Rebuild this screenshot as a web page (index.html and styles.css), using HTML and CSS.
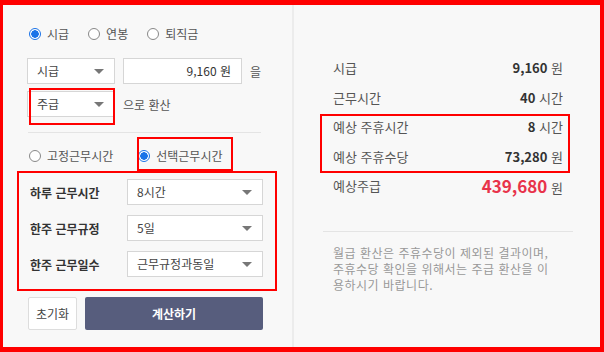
FILE: index.html
```html
<!DOCTYPE html>
<html lang="ko">
<head>
    <meta charset="UTF-8">
    <meta name="viewport" content="width=device-width, initial-scale=1.0">
    <title>주급 계산기</title>
    <link rel="stylesheet" href="styles.css">
</head>
<body>
    <div class="frame">
        <div class="calc">
            <section class="input-panel">
                <div class="radio-row">
                    <label class="radio on"><span class="dot"></span>시급</label>
                    <label class="radio"><span class="dot"></span>연봉</label>
                    <label class="radio"><span class="dot"></span>퇴직금</label>
                </div>
                <div class="row first">
                    <div class="select unit">시급<span class="caret"></span></div>
                    <div class="amount">9,160 원</div>
                    <span class="suffix">을</span>
                </div>
                <div class="row">
                    <div class="select unit">주급<span class="caret"></span></div>
                    <span class="suffix">으로 환산</span>
                </div>
                <div class="line"></div>
                <div class="radio-row">
                    <label class="radio wide"><span class="dot"></span>고정근무시간</label>
                    <label class="radio on"><span class="dot"></span>선택근무시간</label>
                </div>
                <div class="fields">
                    <div class="field">
                        <span class="label">하루 근무시간</span>
                        <div class="select long">8시간<span class="caret"></span></div>
                    </div>
                    <div class="field">
                        <span class="label">한주 근무규정</span>
                        <div class="select long">5일<span class="caret"></span></div>
                    </div>
                    <div class="field">
                        <span class="label">한주 근무일수</span>
                        <div class="select long">근무규정과동일<span class="caret"></span></div>
                    </div>
                </div>
                <div class="buttons">
                    <button class="btn-reset">초기화</button>
                    <button class="btn-calc">계산하기</button>
                </div>
            </section>
            <div class="divider"></div>
            <section class="result-panel">
                <div class="result">
                    <span>시급</span>
                    <span class="value"><b>9,160</b> 원</span>
                </div>
                <div class="result">
                    <span>근무시간</span>
                    <span class="value"><b>40</b> 시간</span>
                </div>
                <div class="result">
                    <span>예상 주휴시간</span>
                    <span class="value"><b>8</b> 시간</span>
                </div>
                <div class="result">
                    <span>예상 주휴수당</span>
                    <span class="value"><b>73,280</b> 원</span>
                </div>
                <div class="result">
                    <span>예상주급</span>
                    <span class="value"><b class="total">439,680</b> 원</span>
                </div>
                <div class="line result-line"></div>
                <p class="note">월급 환산은 주휴수당이 제외된 결과이며,<br>주휴수당 확인을 위해서는 주급 환산을 이<br>용하시기 바랍니다.</p>
            </section>
        </div>
        <div class="mark mark-unit"></div>
        <div class="mark mark-mode"></div>
        <div class="mark mark-fields"></div>
        <div class="mark mark-result"></div>
    </div>
</body>
</html>
```

FILE: styles.css
```css
* {
    box-sizing: border-box;
}
body {
    margin: 0;
    padding: 0;
    font-family: "Noto Sans CJK KR", "Noto Sans", sans-serif;
    font-size: 12px;
    color: #444;
    background-color: #f8f8f8;
}
.frame {
    position: relative;
    width: 604px;
    height: 352px;
    border-style: solid;
    border-color: #ff0000;
    border-width: 5px 4px 5px 3px;
    background-color: #f8f8f8;
}
.calc {
    display: flex;
    height: 100%;
}
.input-panel {
    width: 289px;
    padding: 21px 0 0 24px;
}
.divider {
    width: 2px;
    background-color: #ececec;
}
.radio-row {
    display: flex;
    height: 16px;
    align-items: center;
    padding-left: 2px;
}
.radio {
    display: flex;
    align-items: center;
    gap: 6px;
    margin-right: 19px;
    line-height: 16px;
    color: #555;
    font-size: 12px;
}
.radio.wide {
    margin-right: 25px;
}
.dot {
    width: 12px;
    height: 12px;
    border: 1px solid #888;
    border-radius: 50%;
    background-color: #fff;
}
.radio.on .dot {
    border-color: #1a73e8;
    background: radial-gradient(circle, #1a73e8 0 3.5px, #fff 4px);
}
.row {
    display: flex;
    align-items: center;
    gap: 8px;
    margin-top: 7px;
}
.row.first {
    margin-top: 16px;
}
.select {
    position: relative;
    height: 26px;
    line-height: 24px;
    padding-left: 9px;
    border: 1px solid #d6d6d6;
    background-color: #fff;
    color: #444;
}
.select.unit {
    width: 88px;
}
.select.long {
    width: 136px;
}
.caret {
    position: absolute;
    right: 10px;
    top: 10px;
    border-left: 5px solid transparent;
    border-right: 5px solid transparent;
    border-top: 5px solid #777;
}
.amount {
    width: 119px;
    height: 26px;
    line-height: 24px;
    padding-right: 10px;
    text-align: right;
    border: 1px solid #d6d6d6;
    background-color: #fff;
    color: #333;
}
.suffix {
    color: #555;
}
.line {
    height: 1px;
    width: 233px;
    margin: 15px 0 15px 1px;
    background-color: #e4e4e4;
}
.fields {
    margin-top: 15px;
}
.field {
    display: flex;
    align-items: center;
    margin-bottom: 10px;
}
.label {
    width: 100px;
    padding-left: 3px;
    font-weight: bold;
    color: #333;
}
.buttons {
    display: flex;
    gap: 8px;
    margin-top: 20px;
    padding-left: 1px;
}
button {
    height: 33px;
    font-family: inherit;
    font-size: 12px;
    border-radius: 2px;
    cursor: pointer;
}
.btn-reset {
    width: 49px;
    padding: 0;
    border: 1px solid #ddd;
    background-color: #fff;
    color: #444;
}
.btn-calc {
    width: 178px;
    border: none;
    background-color: #575d7d;
    color: #fff;
    font-weight: bold;
}
.result-panel {
    flex: 1;
    padding: 48px 27px 0 29px;
}
.result {
    display: flex;
    justify-content: space-between;
    align-items: center;
    height: 29.5px;
    padding: 0 10px;
    font-size: 13px;
    color: #555;
}
.value {
    color: #555;
}
.value b {
    color: #333;
}
.value b.total {
    font-size: 17px;
    color: #e8334a;
}
.result-line {
    width: auto;
    margin: 30px 0 13px;
}
.note {
    margin: 0;
    padding-left: 10px;
    font-size: 12px;
    line-height: 16px;
    letter-spacing: 0.5px;
    color: #999;
}
.mark {
    position: absolute;
    border: 2px solid #ff0000;
}
.mark-unit {
    left: 26px;
    top: 83px;
    width: 86px;
    height: 37px;
}
.mark-mode {
    left: 134px;
    top: 132px;
    width: 96px;
    height: 34px;
}
.mark-fields {
    left: 14px;
    top: 166px;
    width: 260px;
    height: 120px;
}
.mark-result {
    left: 317px;
    top: 109px;
    width: 250px;
    height: 59px;
}
```
